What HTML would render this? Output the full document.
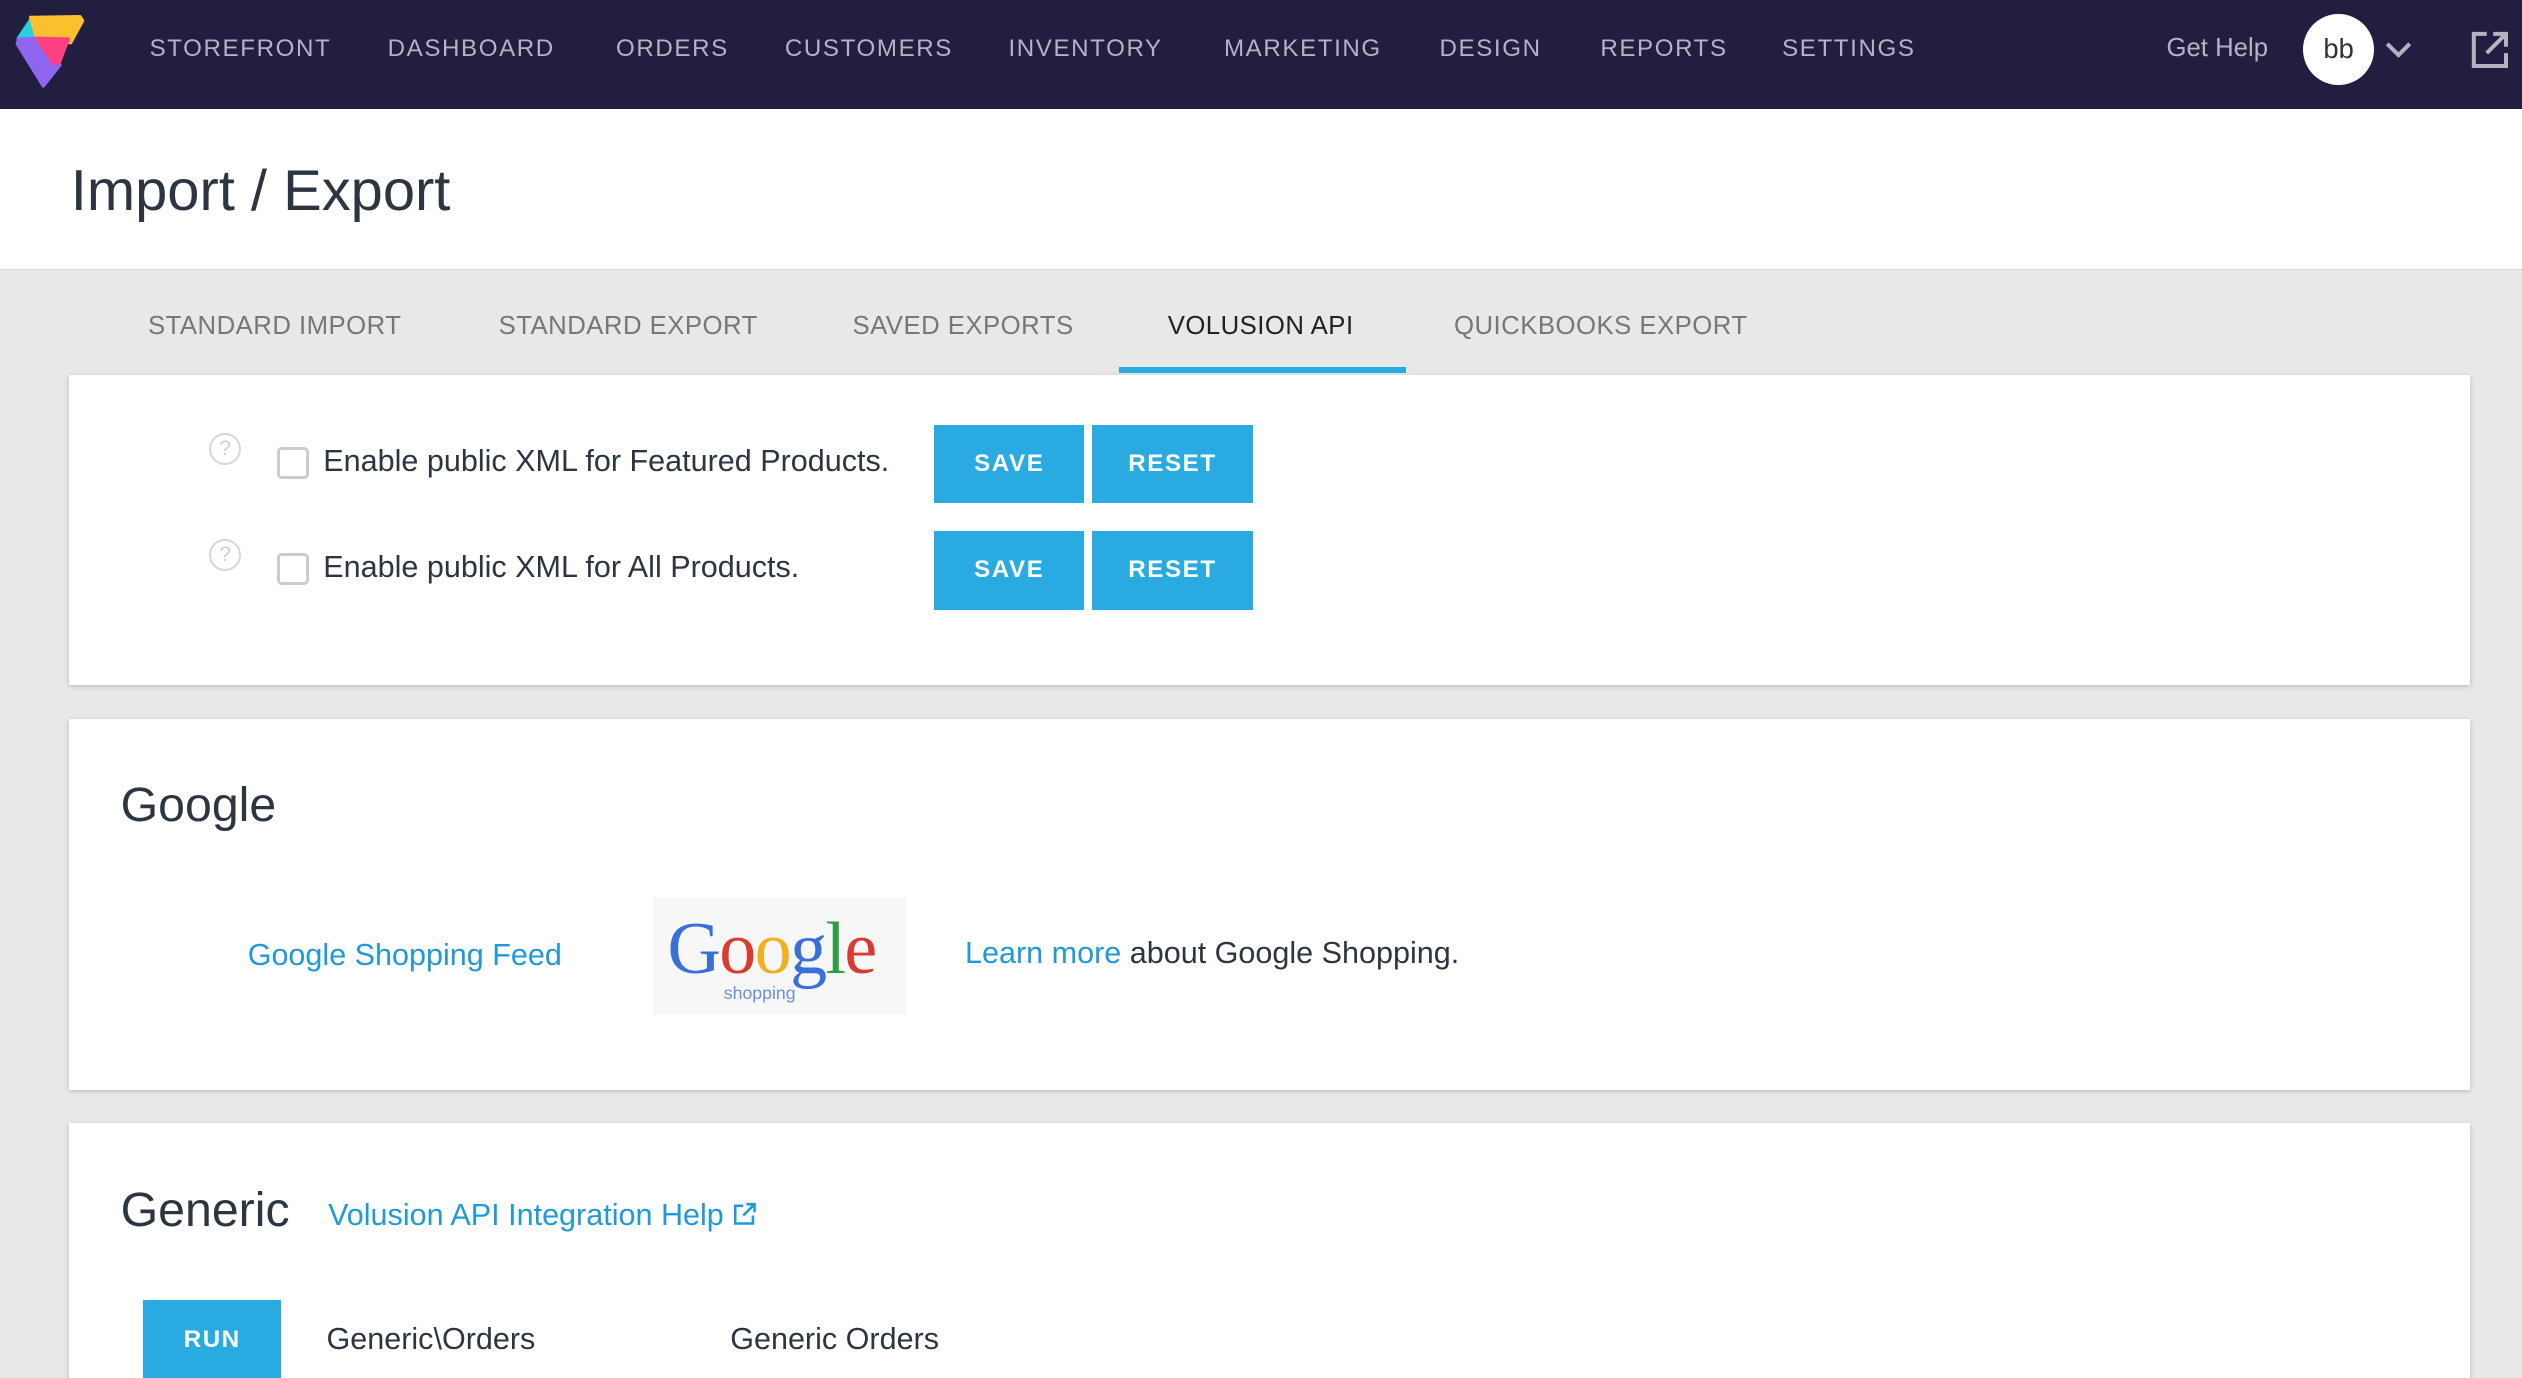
<!DOCTYPE html>
<html><head><meta charset="utf-8"><style>
*{box-sizing:border-box;margin:0;padding:0}
html,body{width:2522px;height:1378px;overflow:hidden;background:#e8e8e8}
#w{zoom:1.6084;width:1568px;height:857px;position:relative;font-family:"Liberation Sans",sans-serif;color:#2d3640}
.nav{position:absolute;left:0;top:0;width:1568px;height:68px;background:#211e3f}
.nav .it{position:absolute;top:22px;color:#b4b3c2;font-size:15px;letter-spacing:1px}
.hdr{position:absolute;top:68px;left:0;width:1568px;height:100px;background:#fff;border-bottom:1px solid #d8d8d8}
.hdr h1{position:absolute;left:44px;top:30px;font-weight:normal;font-size:36px;color:#2d3640}
.tab{position:absolute;top:194px;font-size:16px;color:#777;letter-spacing:.3px}
.card{position:absolute;left:43px;width:1493px;background:#fff;box-shadow:0 1px 3px rgba(0,0,0,.2)}
.btn{position:absolute;background:#29aae1;color:#fff;font-weight:bold;font-size:15px;letter-spacing:1px;text-align:center}
.q{position:absolute;width:20px;height:20px;border:1.5px solid #d5d8d8;border-radius:50%;color:#ccd;font-size:13px;text-align:center;line-height:17px}
.cb{position:absolute;width:20px;height:20px;border:2px solid #ccc;border-radius:3px}
.t{position:absolute;font-size:19px;color:#2d3640;white-space:nowrap}
.a{color:#1f9ad6}
</style></head><body><div id="w">
<div class="nav">
<svg style="position:absolute;left:9.3px;top:9.3px" width="43.5" height="45.6" viewBox="45 45 210 220"><g stroke-linejoin="round" stroke-width="10"><path d="M95 55 L55 115 L110 115 Z" fill="#26d0e0" stroke="#26d0e0"/><path d="M92 52 L240 50 L248 62 L212 128 L110 115 Z" fill="#fbc02d" stroke="#fbc02d"/><path d="M55 118 L110 115 L160 190 L180 195 L130 258 L52 132 Z" fill="#8e66f0" stroke="#8e66f0"/><path d="M110 115 L205 117 L178 188 L160 190 Z" fill="#ff4081" stroke="#ff4081"/></g></svg>
<div class="it" style="left:93px">STOREFRONT</div><div class="it" style="left:241px">DASHBOARD</div><div class="it" style="left:383px">ORDERS</div><div class="it" style="left:488px">CUSTOMERS</div><div class="it" style="left:627px">INVENTORY</div><div class="it" style="left:761px">MARKETING</div><div class="it" style="left:895px">DESIGN</div><div class="it" style="left:995px">REPORTS</div><div class="it" style="left:1108px">SETTINGS</div>
<div class="it" style="left:1347px;letter-spacing:0;font-size:16px;top:21px">Get Help</div>
<div style="position:absolute;left:1432px;top:9px;width:44px;height:44px;border-radius:50%;background:#fff;color:#333;font-size:17px;text-align:center;line-height:44px">bb</div>
<svg style="position:absolute;left:1482px;top:24px" width="18" height="14"><path d="M2 3 L9 10 L16 3" stroke="#b4b3c2" stroke-width="2.5" fill="none"/></svg>
<svg style="position:absolute;left:1535px;top:18px" width="26" height="26"><path d="M11 3 H3 V23 H23 V15" stroke="#b4b3c2" stroke-width="2.5" fill="none"/><path d="M11 15 L23 3 M15 3 H23 V11" stroke="#b4b3c2" stroke-width="2.5" fill="none"/></svg>
</div>
<div class="hdr"><h1>Import / Export</h1></div>
<div class="tab" style="left:92px">STANDARD IMPORT</div><div class="tab" style="left:310px">STANDARD EXPORT</div><div class="tab" style="left:530px">SAVED EXPORTS</div><div class="tab" style="left:726px;color:#222">VOLUSION API</div><div class="tab" style="left:904px">QUICKBOOKS EXPORT</div>
<div style="position:absolute;left:696px;top:228px;width:178px;height:4px;background:#29aae1"></div>
<div class="card" style="top:233px;height:193px">
<div class="q" style="left:87px;top:36px">?</div><div class="cb" style="left:129px;top:45px"></div><div class="t" style="left:158px;top:43px">Enable public XML for Featured Products.</div>
<div class="btn" style="left:538px;top:31px;width:93px;height:49px;line-height:49px">SAVE</div><div class="btn" style="left:636px;top:31px;width:100px;height:49px;line-height:49px">RESET</div>
<div class="q" style="left:87px;top:102px">?</div><div class="cb" style="left:129px;top:111px"></div><div class="t" style="left:158px;top:109px">Enable public XML for All Products.</div>
<div class="btn" style="left:538px;top:97px;width:93px;height:49px;line-height:49px">SAVE</div><div class="btn" style="left:636px;top:97px;width:100px;height:49px;line-height:49px">RESET</div>
</div>
<div class="card" style="top:447px;height:231px">
<div class="t" style="left:32px;top:36px;font-size:30px">Google</div>
<div class="t a" style="left:111px;top:136px">Google Shopping Feed</div>
<div style="position:absolute;left:363px;top:111px;width:157px;height:73px;background:#f7f7f7">
<div style="position:absolute;left:9px;top:6px;font-family:'Liberation Serif',serif;font-size:46px;letter-spacing:-1px"><span style="color:#3a6fd8">G</span><span style="color:#d93b30">o</span><span style="color:#f2b01e">o</span><span style="color:#3a6fd8">g</span><span style="color:#2e9e44">l</span><span style="color:#d93b30">e</span></div>
<div style="position:absolute;left:44px;top:53px;font-size:11px;color:#6b8fdc">shopping</div></div>
<div class="t" style="left:557px;top:135px"><span class="a">Learn more</span> about Google Shopping.</div>
</div>
<div class="card" style="top:698px;height:180px">
<div class="t" style="left:32px;top:37px;font-size:30px">Generic</div>
<div class="t a" style="left:161px;top:47px">Volusion API Integration Help <svg width="16" height="16" style="vertical-align:-1px"><path d="M7 3 H2 V14 H13 V9 M7 9 L14 2 M9 2 H14 V7" stroke="#1f9ad6" stroke-width="1.6" fill="none"/></svg></div>
<div class="btn" style="left:46px;top:110px;width:86px;height:50px;line-height:50px">RUN</div>
<div class="t" style="left:160px;top:124px">Generic\Orders</div><div class="t" style="left:411px;top:124px">Generic Orders</div>
</div>
</div></body></html>
